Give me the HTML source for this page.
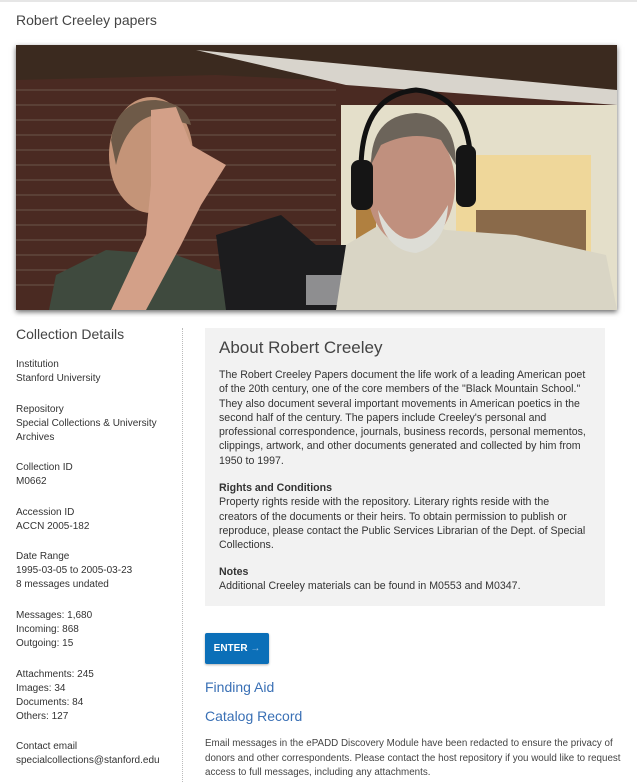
<!DOCTYPE html>
<html><head><meta charset="utf-8"><style>
*{margin:0;padding:0;box-sizing:border-box}
body{width:637px;height:782px;background:#fff;font-family:"Liberation Sans",Arial,sans-serif;color:#333;position:relative;overflow:hidden}
.topline{position:absolute;left:0;top:0;width:637px;height:2px;background:#e6e6e6}
.t{position:absolute;white-space:nowrap}
.title{left:16px;top:12px;font-size:14px;color:#444}
.photo{position:absolute;left:16px;top:45px;width:601px;height:265px;box-shadow:0 2px 5px rgba(0,0,0,.6);overflow:hidden}
.lc{position:absolute;left:16px;font-size:10px;line-height:14px;color:#333}
.div{position:absolute;left:182px;top:328px;height:454px;border-left:1px dotted #bbb}
.box{position:absolute;left:205px;top:328px;width:400px;height:278px;background:#f2f2f2}
.rp{position:absolute;left:219px;width:368px;font-size:10.6px;line-height:14.3px;color:#333}
.btn{position:absolute;left:205px;top:633px;width:64px;height:31px;background:#0b6fb8;border-radius:2px;color:#fff;font-weight:bold;font-size:10px;line-height:31px;text-align:center;box-shadow:0 1px 2px rgba(0,0,0,.3)}
.lnk{position:absolute;left:205px;font-size:14px;color:#3a70b5}
</style></head><body>
<div class="topline"></div>
<div class="t title">Robert Creeley papers</div>
<div class="photo">
<svg width="601" height="265" viewBox="0 0 601 265">
<rect width="601" height="265" fill="#4a2a22"/>
<g stroke="#76665a" stroke-width="1.2" opacity=".6">
<line x1="0" y1="45" x2="320" y2="45"/><line x1="0" y1="60" x2="320" y2="60"/><line x1="0" y1="75" x2="320" y2="75"/><line x1="0" y1="90" x2="320" y2="90"/><line x1="0" y1="105" x2="320" y2="105"/><line x1="0" y1="120" x2="320" y2="120"/><line x1="0" y1="135" x2="320" y2="135"/><line x1="0" y1="150" x2="320" y2="150"/><line x1="0" y1="165" x2="320" y2="165"/><line x1="0" y1="180" x2="320" y2="180"/><line x1="0" y1="195" x2="320" y2="195"/><line x1="0" y1="210" x2="320" y2="210"/><line x1="0" y1="225" x2="320" y2="225"/><line x1="0" y1="240" x2="320" y2="240"/>
</g>
<path d="M0 0H601V50L400 40 200 30 0 35Z" fill="#3b2a1f"/>
<path d="M180 5 L601 45 L601 60 L330 40Z" fill="#d8d4cc"/>
<rect x="325" y="60" width="276" height="205" fill="#e4dfca"/>
<rect x="440" y="110" width="135" height="100" fill="#efd79a"/>
<rect x="460" y="165" width="110" height="45" fill="#8a6a4a"/>
<rect x="340" y="120" width="20" height="80" fill="#b08040"/>
<path d="M33 265 L40 230 L90 205 L160 210 L215 230 L225 265Z" fill="#3f4a3e"/>
<ellipse cx="135" cy="110" rx="42" ry="58" fill="#c49478"/>
<path d="M95 95 Q100 55 140 55 Q170 58 175 80 L140 70 Q110 75 100 120Z" fill="#6e5a48"/>
<path d="M135 65 L160 62 L175 100 L210 120 L185 160 L165 200 L130 265 L95 265 L130 190 L135 140Z" fill="#d3a088"/>
<path d="M200 190 L265 170 L300 200 L330 200 L365 220 L365 265 L210 265Z" fill="#1c1c1e"/>
<rect x="290" y="230" width="75" height="30" fill="#8e8e90"/>
<path d="M320 265 L330 200 L380 170 L430 185 L500 190 L590 210 L601 265Z" fill="#d9d5c5"/>
<ellipse cx="395" cy="140" rx="44" ry="62" fill="#c0907e"/>
<path d="M355 120 Q355 70 400 68 Q440 70 440 120 L425 95 Q395 85 365 100Z" fill="#6c645a"/>
<path d="M362 165 Q395 225 432 160 Q430 200 400 208 Q368 205 362 165Z" fill="#ddddd6"/>
<path d="M345 125 Q345 50 400 45 Q455 50 455 125" fill="none" stroke="#111" stroke-width="5"/>
<rect x="335" y="115" width="22" height="50" rx="8" fill="#151515"/>
<rect x="440" y="100" width="20" height="62" rx="8" fill="#151515"/>
</svg>
</div>

<div class="t" style="left:16px;top:326px;font-size:14px;color:#444">Collection Details</div>
<div class="lc" style="top:358px">Institution<br>Stanford University</div>
<div class="lc" style="top:403px">Repository<br>Special Collections &amp; University<br>Archives</div>
<div class="lc" style="top:461px">Collection ID<br>M0662</div>
<div class="lc" style="top:506px">Accession ID<br>ACCN 2005-182</div>
<div class="lc" style="top:550px">Date Range<br>1995-03-05 to 2005-03-23<br>8 messages undated</div>
<div class="lc" style="top:609px">Messages: 1,680<br>Incoming: 868<br>Outgoing: 15</div>
<div class="lc" style="top:668px">Attachments: 245<br>Images: 34<br>Documents: 84<br>Others: 127</div>
<div class="lc" style="top:740px">Contact email<br>specialcollections@stanford.edu</div>
<div class="div"></div>

<div class="box"></div>
<div class="t" style="left:219px;top:338px;font-size:17px;color:#444">About Robert Creeley</div>
<div class="rp" style="top:368px">The Robert Creeley Papers document the life work of a leading American poet of the 20th century, one of the core members of the "Black Mountain School." They also document several important movements in American poetics in the second half of the century. The papers include Creeley's personal and professional correspondence, journals, business records, personal mementos, clippings, artwork, and other documents generated and collected by him from 1950 to 1997.</div>
<div class="rp" style="top:481px"><b>Rights and Conditions</b><br>Property rights reside with the repository. Literary rights reside with the creators of the documents or their heirs. To obtain permission to publish or reproduce, please contact the Public Services Librarian of the Dept. of Special Collections.</div>
<div class="rp" style="top:565px"><b>Notes</b><br>Additional Creeley materials can be found in M0553 and M0347.</div>

<div class="btn">ENTER <span style="color:#9cc4e6;font-weight:normal">→</span></div>
<div class="lnk" style="top:679px">Finding Aid</div>
<div class="lnk" style="top:708px">Catalog Record</div>
<div class="t" style="left:205px;top:737px;font-size:9.8px;line-height:14.5px;color:#444">Email messages in the ePADD Discovery Module have been redacted to ensure the privacy of<br>donors and other correspondents. Please contact the host repository if you would like to request<br>access to full messages, including any attachments.</div>
</body></html>
